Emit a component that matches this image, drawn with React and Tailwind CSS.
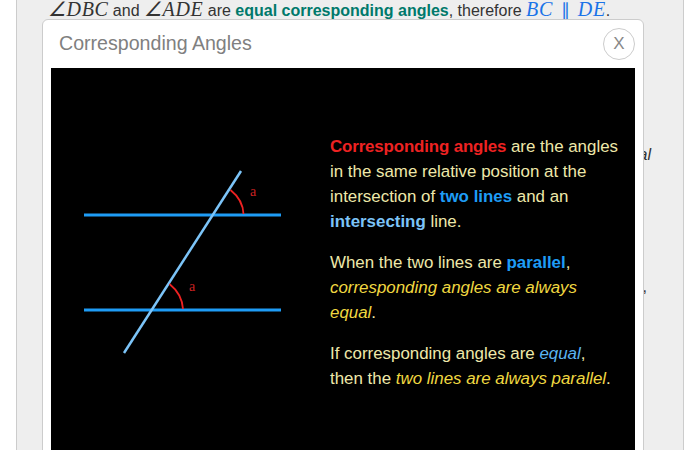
const SANS = 'font-["Liberation_Sans",Arial,sans-serif]'

function MathText({ className, children }) {
  return (
    <span className={`font-['Liberation_Serif',serif] italic text-[20px] tracking-[0.6px] ${className}`}>
      {children}
    </span>
  )
}

function AnglesDiagram() {
  return (
    <svg width="279" height="320" viewBox="0 0 279 320" className="shrink-0" fill="none">
      <path d="M33 147 H230" stroke="#1e9cf5" strokeWidth="3" />
      <path d="M33 242 H230" stroke="#1e9cf5" strokeWidth="3" />
      <path d="M73 285 L190 103" stroke="#7cc4f8" strokeWidth="2.500" />
      <path d="M179.500 122 Q192 132 192.500 146" stroke="#ee2222" strokeWidth="1.800" />
      <path d="M118.500 216 Q131 226 132 241" stroke="#ee2222" strokeWidth="1.800" />
      <text x="199" y="128" fill="#cc2222" fontSize="14" fontFamily="Liberation Serif, serif">a</text>
      <text x="138" y="223" fill="#cc2222" fontSize="14" fontFamily="Liberation Serif, serif">a</text>
    </svg>
  )
}

export default function App() {
  return (
    <div className={`w-[700px] h-[450px] overflow-hidden bg-white ${SANS}`}>
      <div className="relative mx-4 h-[450px] border-x border-[#cccccc] bg-[#eeeeee] text-[#333333]">
        {/* Lesson text behind the dialog */}
        <p className="pl-[31px] text-base leading-[18px] whitespace-nowrap">
          <MathText>∠DBC</MathText> and <MathText>∠ADE</MathText> are{' '}
          <b className="text-[#00796b]">equal corresponding angles</b>, therefore{' '}
          <MathText className="text-[#1a73e8]">BC</MathText>
          <span className="mx-2 text-[18px] text-[#1a73e8]">∥</span>
          <MathText className="text-[#1a73e8]">DE</MathText>.
        </p>
        <p className="mt-[125px] pr-[32px] text-right text-base leading-[20px] italic">equal</p>
        <p className="mt-[112px] pr-[36px] text-right text-base leading-[20px]">,</p>

        {/* Dialog */}
        <div className="absolute left-[25px] top-[19px] w-[602px] h-[500px] rounded-md border border-[#cccccc] bg-white px-2">
          <div className="flex h-[48px] items-center justify-between pl-2">
            <h2 className="text-[19.6px] text-[#808080]">Corresponding Angles</h2>
            <button className="flex h-8 w-8 items-center justify-center rounded-full border border-[#cccccc] text-[17px] text-[#888888]">
              X
            </button>
          </div>
          <div className="flex h-[420px] bg-black">
            <AnglesDiagram />
            <div className="mt-[66px] w-[290px] text-[16.9px] leading-[25px] text-[#eee8aa]">
              <p className="mb-4">
                <b className="tracking-[-0.15px] text-[#ee2222]">Corresponding angles</b> are the angles in the same relative position at the intersection of{' '}
                <b className="text-[#1e9cf5]">two lines</b> and an{' '}
                <b className="text-[#7cc4f8]">intersecting</b> line.
              </p>
              <p className="mb-4">
                When the two lines are <b className="text-[#1e9cf5]">parallel</b>,{' '}
                <i className="text-[#f0d840]">corresponding angles are always equal</i>.
              </p>
              <p>
                If corresponding angles are <i className="text-[#5ab4f0]">equal</i>,<br />
                then the <i className="text-[#f0d840]">two lines are always parallel</i>.
              </p>
            </div>
          </div>
        </div>
      </div>
    </div>
  )
}
